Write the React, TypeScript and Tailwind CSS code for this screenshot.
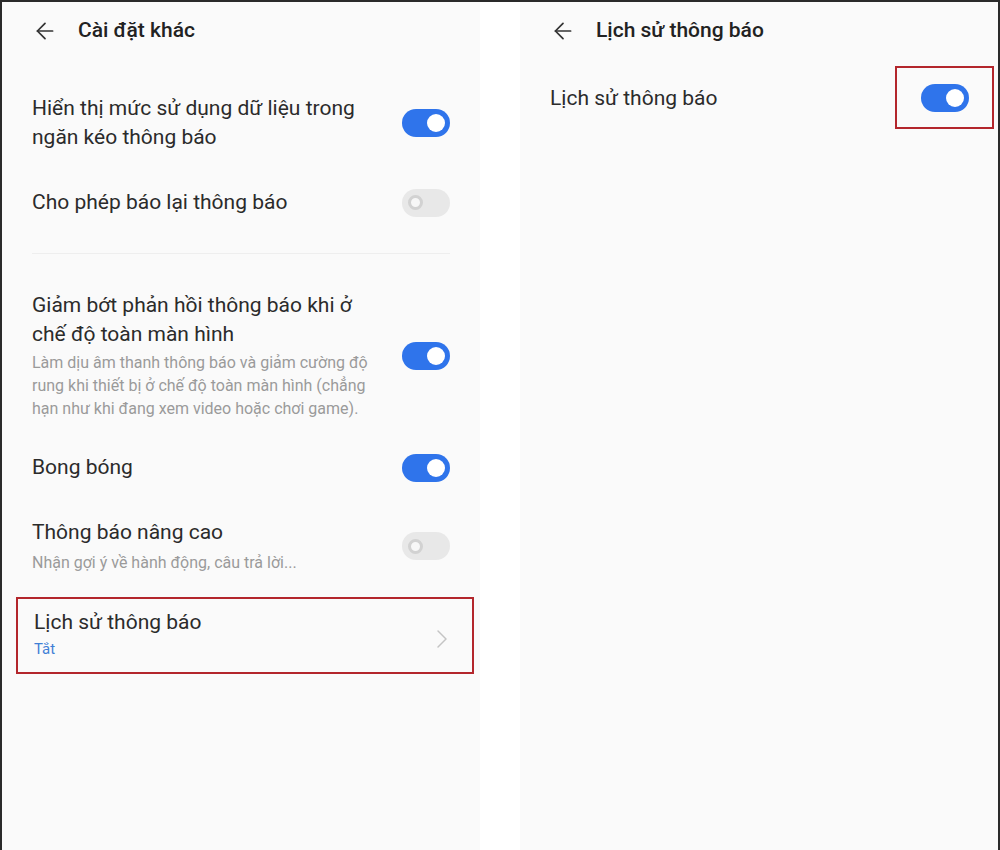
import { ArrowLeft, ChevronRight } from 'lucide-react';

const font = { fontFamily: 'Roboto, "Noto Sans", sans-serif' };

const Toggle = ({ on }: { on: boolean }) =>
  on ? (
    <div className="flex h-[28px] w-[48px] shrink-0 items-center justify-end rounded-full bg-[#2f74eb] pr-[5px]">
      <div className="h-[18px] w-[18px] rounded-full bg-white" />
    </div>
  ) : (
    <div className="flex h-[28px] w-[48px] shrink-0 items-center rounded-full bg-[#e8e8e8] pl-[6px]">
      <div className="h-[15px] w-[15px] rounded-full border-[3px] border-[#d2d2d2] bg-[#f7f7f7]" />
    </div>
  );

const Header = ({ title }: { title: string }) => (
  <div className="flex h-[58px] items-center gap-[20px]">
    <ArrowLeft className="h-[26px] w-[26px] text-[#333]" strokeWidth={1.6} />
    <span className="text-[21px] font-medium text-[#222]">{title}</span>
  </div>
);

const App = () => {
  return (
    <div
      className="flex h-[850px] w-[1000px] border-l-2 border-r-2 border-t-2 border-[#2a2a2a] bg-white"
      style={font}
    >
      {/* left panel */}
      <div className="w-[478px] bg-[#fafafa] pl-[30px]">
        <Header title="Cài đặt khác" />

        <div className="pr-[30px]">
          <div className="mt-[34px] flex items-center justify-between">
            <p className="w-[345px] text-[21px] leading-[29px] text-[#2b2b2b]">
              Hiển thị mức sử dụng dữ liệu trong ngăn kéo thông báo
            </p>
            <Toggle on />
          </div>

          <div className="mt-[36px] flex items-center justify-between">
            <p className="text-[21px] leading-[29px] text-[#2b2b2b]">Cho phép báo lại thông báo</p>
            <Toggle on={false} />
          </div>

          <div className="mt-[36px] h-px bg-[#eeeeee]" />

          <div className="mt-[37px] flex items-center justify-between">
            <div className="w-[345px]">
              <p className="text-[21px] leading-[29px] text-[#2b2b2b]">
                Giảm bớt phản hồi thông báo khi ở chế độ toàn màn hình
              </p>
              <p className="mt-[2px] text-[16px] leading-[23px] text-[#9a9a9a]">
                Làm dịu âm thanh thông báo và giảm cường độ rung khi thiết bị ở chế độ toàn màn hình (chẳng hạn như khi đang xem video hoặc chơi game).
              </p>
            </div>
            <Toggle on />
          </div>

          <div className="mt-[33px] flex items-center justify-between">
            <p className="text-[21px] leading-[29px] text-[#2b2b2b]">Bong bóng</p>
            <Toggle on />
          </div>

          <div className="mt-[36px] flex items-center justify-between">
            <div>
              <p className="text-[21px] leading-[29px] text-[#2b2b2b]">Thông báo nâng cao</p>
              <p className="mt-[4px] text-[16px] leading-[23px] text-[#9a9a9a]">
                Nhận gợi ý về hành động, câu trả lời...
              </p>
            </div>
            <Toggle on={false} />
          </div>
        </div>

        <div className="-ml-[16px] mr-[6px] mt-[23px] flex h-[77px] items-center justify-between border-2 border-[#b3262c] pl-[16px] pr-[14px]">
          <div className="pb-[2px]">
            <p className="text-[21px] leading-[29px] text-[#2b2b2b]">Lịch sử thông báo</p>
            <p className="text-[15px] leading-[25px] text-[#3f7fd6]">Tắt</p>
          </div>
          <ChevronRight className="mt-[6px] h-[32px] w-[32px] text-[#c4c4c4]" strokeWidth={1.1} />
        </div>
      </div>

      {/* gap */}
      <div className="w-[40px] bg-white" />

      {/* right panel */}
      <div className="flex-1 bg-[#fafafa] pl-[30px]">
        <Header title="Lịch sử thông báo" />
        <div className="flex items-center justify-between">
          <p className="mt-[8px] text-[21px] leading-[29px] text-[#2b2b2b]">Lịch sử thông báo</p>
          <div className="mr-[4px] mt-[6px] flex h-[63px] w-[99px] items-center justify-center border-2 border-[#b3262c]">
            <Toggle on />
          </div>
        </div>
      </div>
    </div>
  );
};

export default App;
